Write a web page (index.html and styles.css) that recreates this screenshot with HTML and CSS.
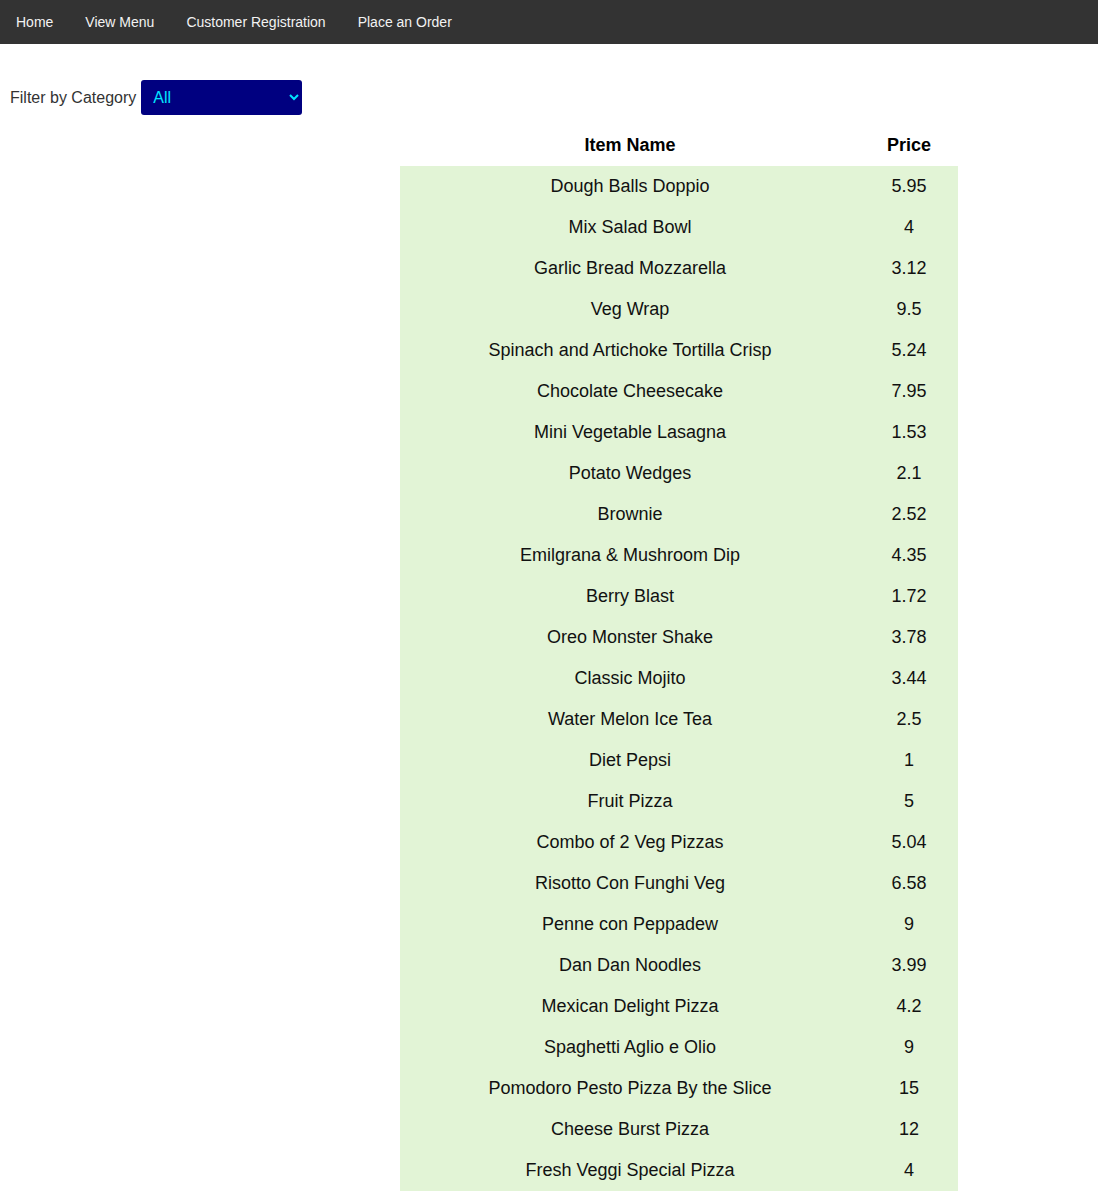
FILE: index.html
```html
<!DOCTYPE html>
<html lang="en">
<head>
<meta charset="utf-8">
<title>View Menu</title>
<link rel="stylesheet" href="styles.css">
</head>
<body>
<nav class="topnav">
  <a href="#">Home</a>
  <a href="#">View Menu</a>
  <a href="#">Customer Registration</a>
  <a href="#">Place an Order</a>
</nav>
<main class="content">
  <div class="filter">
    <label for="cat">Filter by Category</label>
    <select id="cat" class="cat-select">
      <option>All</option>
      <option>Starters</option>
      <option>Mains</option>
      <option>Desserts</option>
      <option>Beverages</option>
    </select>
  </div>
  <table class="menu">
    <thead>
      <tr><th class="name">Item Name</th><th class="price">Price</th></tr>
    </thead>
    <tbody>
      <tr><td>Dough Balls Doppio</td><td>5.95</td></tr>
      <tr><td>Mix Salad Bowl</td><td>4</td></tr>
      <tr><td>Garlic Bread Mozzarella</td><td>3.12</td></tr>
      <tr><td>Veg Wrap</td><td>9.5</td></tr>
      <tr><td>Spinach and Artichoke Tortilla Crisp</td><td>5.24</td></tr>
      <tr><td>Chocolate Cheesecake</td><td>7.95</td></tr>
      <tr><td>Mini Vegetable Lasagna</td><td>1.53</td></tr>
      <tr><td>Potato Wedges</td><td>2.1</td></tr>
      <tr><td>Brownie</td><td>2.52</td></tr>
      <tr><td>Emilgrana &amp; Mushroom Dip</td><td>4.35</td></tr>
      <tr><td>Berry Blast</td><td>1.72</td></tr>
      <tr><td>Oreo Monster Shake</td><td>3.78</td></tr>
      <tr><td>Classic Mojito</td><td>3.44</td></tr>
      <tr><td>Water Melon Ice Tea</td><td>2.5</td></tr>
      <tr><td>Diet Pepsi</td><td>1</td></tr>
      <tr><td>Fruit Pizza</td><td>5</td></tr>
      <tr><td>Combo of 2 Veg Pizzas</td><td>5.04</td></tr>
      <tr><td>Risotto Con Funghi Veg</td><td>6.58</td></tr>
      <tr><td>Penne con Peppadew</td><td>9</td></tr>
      <tr><td>Dan Dan Noodles</td><td>3.99</td></tr>
      <tr><td>Mexican Delight Pizza</td><td>4.2</td></tr>
      <tr><td>Spaghetti Aglio e Olio</td><td>9</td></tr>
      <tr><td>Pomodoro Pesto Pizza By the Slice</td><td>15</td></tr>
      <tr><td>Cheese Burst Pizza</td><td>12</td></tr>
      <tr><td>Fresh Veggi Special Pizza</td><td>4</td></tr>
    </tbody>
  </table>
</main>
</body>
</html>
```

FILE: styles.css
```css
html, body {
  margin: 0;
  padding: 0;
  background: #ffffff;
  font-family: "Liberation Sans", Arial, sans-serif;
}

.topnav {
  display: flex;
  background: #333333;
  height: 44px;
}

.topnav a {
  color: #f2f2f2;
  text-decoration: none;
  font-size: 14px;
  line-height: 16px;
  padding: 14px 16px;
}

.content {
  padding: 36px 0 0 10px;
}

.filter {
  display: flex;
  align-items: center;
  gap: 5px;
  height: 35px;
}

.filter label {
  font-size: 16px;
  color: #333333;
}

.cat-select {
  width: 161px;
  height: 35px;
  background: #000080;
  color: #00e5ff;
  border: none;
  border-radius: 3px;
  font-family: "Liberation Sans", Arial, sans-serif;
  font-size: 16px;
  padding: 0 8px;
}

.menu {
  margin: 10px 0 0 390px;
  width: 558px;
  border-collapse: collapse;
  font-size: 18px;
}

.menu th, .menu td {
  text-align: center;
  padding: 10px 0;
  line-height: 21px;
}

.menu th {
  font-weight: bold;
  color: #000000;
}

.menu th.name {
  width: 460px;
}

.menu tbody tr {
  background: #e2f4d6;
}

.menu td {
  color: #111111;
}
```
